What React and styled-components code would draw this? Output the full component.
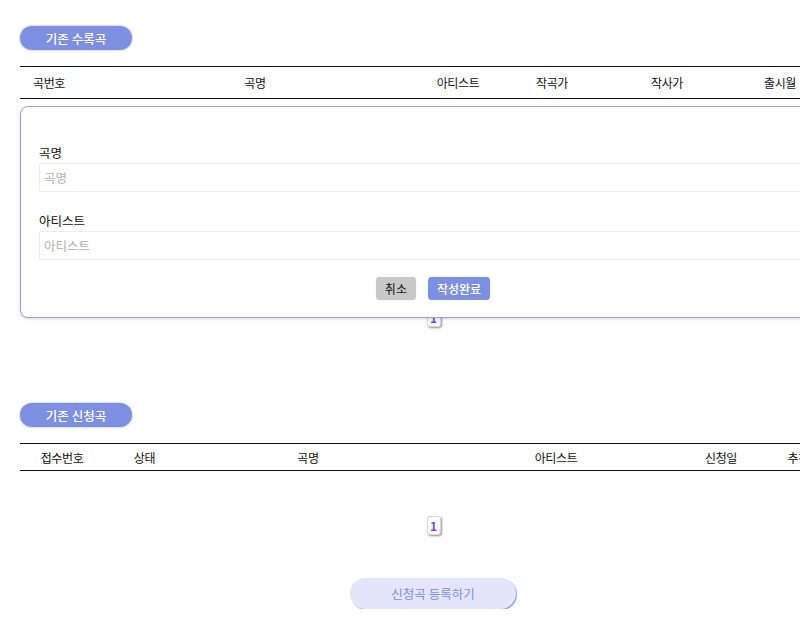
import React from "react";
import styled, { createGlobalStyle } from "styled-components";

const Global = createGlobalStyle`
  html, body { margin: 0; padding: 0; overflow: hidden; background: #fff; }
  body { font-family: "Noto Sans CJK KR", "Noto Sans", sans-serif; color: #222; }
  * { box-sizing: border-box; }
`;

const Page = styled.div`
  position: relative;
  width: 826px;
  margin-left: 20px;
  padding-top: 26px;
`;

const Section = styled.section`
  position: relative;
  display: flex;
  flex-direction: column;
  margin-bottom: ${(p) => p.$mb || 0}px;
`;

const Pill = styled.div`
  width: 112px;
  height: 24px;
  border-radius: 12px;
  background: #7d8fe0;
  color: #fff;
  font-size: 12.5px;
  font-weight: 500;
  display: flex;
  align-items: center;
  justify-content: center;
  box-shadow: 0 0 1px 1px rgba(150, 160, 230, 0.35);
  margin-bottom: 16px;
`;

const HeaderRow = styled.div`
  display: grid;
  grid-template-columns: ${(p) => p.$cols};
  height: ${(p) => p.$h}px;
  border-top: 1px solid #111;
  border-bottom: 1px solid #111;
  align-items: center;
  font-size: 12px;
  letter-spacing: -0.4px;
  color: #111;
  white-space: nowrap;
`;

const HeadCell = styled.div`
  text-align: center;
  overflow: visible;
`;

const Body = styled.div`
  height: ${(p) => p.$h}px;
`;

const Pager = styled.div`
  display: flex;
  justify-content: center;
`;

const PageBtn = styled.div`
  width: 14px;
  height: 19px;
  border-radius: 3px;
  border: 1px solid #d4d4e4;
  background: #fff;
  box-shadow: 1px 1px 2px rgba(60, 60, 90, 0.55);
  color: #7446e6;
  font-size: 12px;
  font-weight: 700;
  display: flex;
  align-items: center;
  justify-content: center;
  margin-left: 1px;
`;

const Modal = styled.div`
  position: absolute;
  left: 0;
  top: 80px;
  width: 826px;
  height: 212px;
  background: #fff;
  border: 1px solid #97a3e6;
  border-radius: 8px;
  box-shadow: 0 1px 3px rgba(0, 0, 0, 0.18);
  padding: 37px 18px 0;
  display: flex;
  flex-direction: column;
`;

const Field = styled.div`
  display: flex;
  flex-direction: column;
  margin-bottom: 20px;
`;

const Label = styled.label`
  font-size: 12.5px;
  font-weight: 400;
  color: #111;
  line-height: 18px;
  margin-bottom: 1px;
`;

const Input = styled.input`
  height: 29px;
  border: 1px solid #ececec;
  border-radius: 2px;
  padding: 0 4px;
  font-family: inherit;
  font-size: 12.5px;
  color: #333;
  outline: none;
  &::placeholder { color: #b0b0b0; }
`;

const Actions = styled.div`
  display: flex;
  justify-content: center;
  gap: 12px;
  margin-top: -3px;
`;

const SmallBtn = styled.button`
  height: 23px;
  padding: 0 9px;
  border: none;
  border-radius: 4px;
  font-family: inherit;
  font-size: 12px;
  font-weight: ${(p) => (p.$primary ? 500 : 400)};
  background: ${(p) => (p.$primary ? "#7d8fe0" : "#c8c8c8")};
  color: ${(p) => (p.$primary ? "#fff" : "#111")};
  box-shadow: 0 0 1px rgba(0, 0, 0, 0.2);
`;

const RegisterWrap = styled.div`
  display: flex;
  justify-content: center;
  margin-top: 43px;
`;

const RegisterBtn = styled.button`
  width: 166px;
  height: 31px;
  border: none;
  border-radius: 16px;
  background: #e4e4fa;
  color: #7d8fe0;
  font-family: inherit;
  font-size: 12.5px;
  font-weight: 400;
  box-shadow: 1px 1px 1px #8d9be6;
`;

const songCols = "58px 354px 52px 136px 94px 132px";
const songHeads = ["곡번호", "곡명", "아티스트", "작곡가", "작사가", "출시월"];
const reqCols = "84px 81px 246px 250px 80px 85px";
const reqHeads = ["접수번호", "상태", "곡명", "아티스트", "신청일", "추천수"];

export default function App() {
  return (
    <>
      <Global />
      <Page>
        <Section $mb={76}>
          <Pill>기존 수록곡</Pill>
          <HeaderRow $cols={songCols} $h={33}>
            {songHeads.map((h) => (
              <HeadCell key={h}>{h}</HeadCell>
            ))}
          </HeaderRow>
          <Body $h={209} />
          <Pager>
            <PageBtn>1</PageBtn>
          </Pager>
          <Modal>
            <Field>
              <Label>곡명</Label>
              <Input placeholder="곡명" />
            </Field>
            <Field>
              <Label>아티스트</Label>
              <Input placeholder="아티스트" />
            </Field>
            <Actions>
              <SmallBtn>취소</SmallBtn>
              <SmallBtn $primary>작성완료</SmallBtn>
            </Actions>
          </Modal>
        </Section>
        <Section>
          <Pill>기존 신청곡</Pill>
          <HeaderRow $cols={reqCols} $h={28}>
            {reqHeads.map((h) => (
              <HeadCell key={h}>{h}</HeadCell>
            ))}
          </HeaderRow>
          <Body $h={45} />
          <Pager>
            <PageBtn>1</PageBtn>
          </Pager>
          <RegisterWrap>
            <RegisterBtn>신청곡 등록하기</RegisterBtn>
          </RegisterWrap>
        </Section>
      </Page>
    </>
  );
}
